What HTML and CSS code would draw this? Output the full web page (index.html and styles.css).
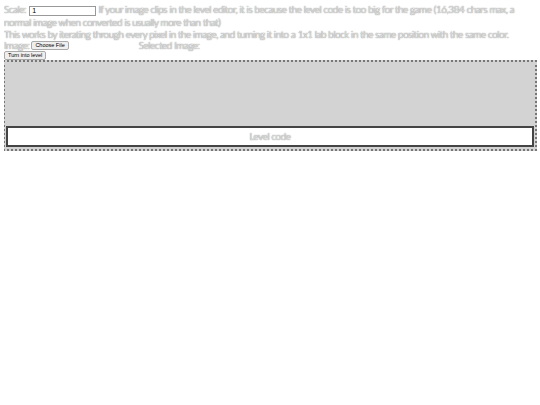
FILE: index.html
```html
<!DOCTYPE html>
<html>
<head>
<meta charset="utf-8">
<link rel="stylesheet" href="styles.css">
</head>
<body>
<div class="intro">Scale: <input class="scale" type="text" value="1"> If your image clips in the level editor, it is because the level code is too big for the game (16,384 chars max, a normal image when converted is usually more than that)</div>
<div class="intro">This works by iterating through every pixel in the image, and turning it into a 1x1 lab block in the same position with the same color.</div>
<div class="row">
  <span class="lbl">Image:</span><button class="btn">Choose File</button>
  <span class="sel">Selected Image:</span>
</div>
<div class="row2"><button class="btn">Turn into level</button></div>
<div class="box">
  <div class="code">Level code</div>
</div>
</body>
</html>
```
FILE: styles.css
```css
body {
  margin: 3px 3px 3px 4px;
  font-family: Lato, sans-serif;
  font-weight: 300;
  font-size: 10px;
  color: #fdfdfd;
  text-shadow: 0 0 1px #555, 0 0 1px #777;
  letter-spacing: -0.45px;
}
.intro {
  line-height: 12px;
}
.scale {
  width: 61px;
  height: 8px;
  font-size: 7px;
  padding: 0 2px;
  border: 1px solid #999;
  margin: 0 0 0 1px;
  vertical-align: middle;
  text-shadow: none;
  color: #000;
  font-family: "Liberation Sans", sans-serif;
}
.row {
  display: flex;
  align-items: center;
  height: 11px;
}
.row2 {
  display: flex;
  height: 9px;
  align-items: center;
}
.btn {
  font-family: "Liberation Sans", sans-serif;
  font-size: 5.5px;
  height: 9px;
  line-height: 7px;
  padding: 0 3px;
  border: 1px solid #aaa;
  border-radius: 2px;
  background: #efefef;
  color: #000;
  text-shadow: none;
  letter-spacing: 0;
  margin: 0;
}
.lbl { margin-right: 2px; }
.sel { margin-left: 70px; }
.box {
  margin: 0 0 0 -1px;
  border: 2px dotted #777;
  background: #d3d3d3;
  height: 84px;
  display: flex;
  flex-direction: column;
  justify-content: flex-end;
  padding: 1px 1px 2px 1px;
}
.code {
  background: #fff;
  border: 2px solid #444;
  height: 17px;
  line-height: 17px;
  text-align: center;
}
```
